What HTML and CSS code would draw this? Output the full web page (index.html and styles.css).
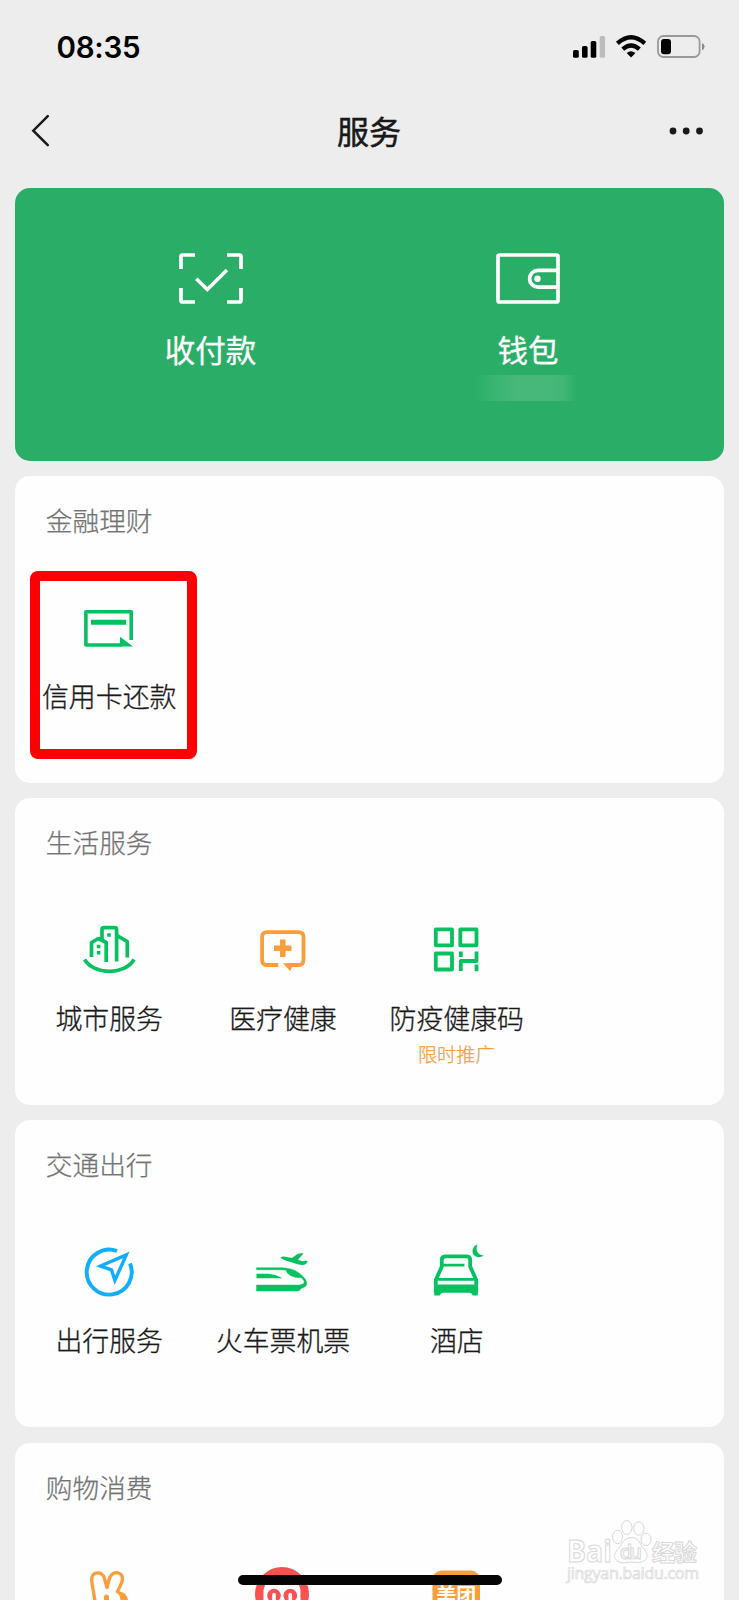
FILE: index.html
```html
<!DOCTYPE html>
<html lang="zh-CN">
<head>
<meta charset="utf-8">
<title>服务</title>
<link rel="stylesheet" href="styles.css">
</head>
<body>
<div class="screen">
  <header class="status">
    <span class="time">08:35</span>
    <svg class="status-icons" width="134" height="26" viewBox="571 34 134 26">
      <rect x="573" y="50" width="5.8" height="7.8" rx="1.6"/>
      <rect x="582" y="46" width="5.6" height="11.8" rx="1.6"/>
      <rect x="590.7" y="41" width="5.6" height="16.8" rx="1.6"/>
      <rect x="599.7" y="36" width="5.4" height="21.8" rx="1.6" fill="#bcbcbc"/>
      <g fill="none" stroke="#000" stroke-width="4.3">
        <path d="M617.4 43.4Q631 31 644.8 43.4"/>
        <path d="M622.8 49.2Q631 41.8 639.4 49.2"/>
      </g>
      <path d="M626.7 53Q631 49.3 635.4 53L631.1 57.6Z"/>
      <rect x="658" y="36" width="41.6" height="21" rx="5.5" fill="none" stroke="#999" stroke-width="1.8"/>
      <rect x="661" y="39" width="10" height="15.2" rx="3"/>
      <path d="M702 43Q704.6 44.3 704.6 46.6T702 50.2Z" fill="#888"/>
    </svg>
  </header>
  <nav class="nav">
    <svg width="24" height="36" viewBox="28 113 24 36"><path d="M47.8 116.2L33.3 130.7L47.8 145.2" fill="none" stroke="#191919" stroke-width="2.5" stroke-linecap="round"/></svg>
    <h1 class="nav-title">服务</h1>
    <svg width="36" height="8" viewBox="669 127 36 8" fill="#191919"><circle cx="673" cy="131" r="3.4"/><circle cx="686.2" cy="131" r="3.4"/><circle cx="699.5" cy="131" r="3.4"/></svg>
  </nav>
  <main class="cards">
    <section class="pay">
      <div class="pay-item">
        <svg width="66" height="54" viewBox="178 252 66 54" fill="none" stroke="#fff" stroke-width="3.7">
          <path d="M195 255H182.500Q181 255 181 256.500V269M227 255H239.500Q241 255 241 256.500V269M195 302H182.500Q181 302 181 300.500V288M227 302H239.500Q241 302 241 300.500V288"/>
          <path d="M196.300 278.800L207.300 289.500L227 270" stroke-width="3.500"/>
        </svg>
        <span class="pay-label">收付款</span>
      </div>
      <div class="pay-item">
        <svg width="66" height="54" viewBox="495 252 66 54" fill="none" stroke="#fff" stroke-width="3.7">
          <rect x="498" y="255" width="60" height="47" rx="1.500"/>
          <path d="M558 270.300H538a8.400 8.400 0 0 0 0 16.800H558"/>
          <circle cx="537.500" cy="278.700" r="3.200" fill="#fff" stroke="none"/>
        </svg>
        <span class="pay-label">钱包</span>
        <span class="balance"></span>
      </div>
    </section>

    <section class="card">
      <h2 class="card-title">金融理财</h2>
      <div class="grid">
        <div class="cell">
          <svg class="icon" viewBox="77 597 64 64" fill="none" stroke="#07c160" stroke-width="3.600" stroke-linejoin="round">
            <path d="M131.200 640V611.700H85.900V645H122" />
            <path d="M120 636.800L133 646.600H120Z" fill="#07c160" stroke="none"/>
            <path d="M91 622.300H126" stroke-width="5"/>
          </svg>
          <span class="label">信用卡还款</span>
        </div>
      </div>
      <div class="highlight"></div>
    </section>

    <section class="card">
      <h2 class="card-title">生活服务</h2>
      <div class="grid">
        <div class="cell">
          <svg class="icon" viewBox="77 919 64 64" fill="none" stroke="#07c160" stroke-width="3.700" stroke-linejoin="round">
            <path d="M91.500 957V942.500L98.500 938.500L106.200 942.500V962"/>
            <path d="M102 939V929.500Q102 927.700 103.800 927.700H114.800Q116.600 927.700 116.600 929.500V961.500"/>
            <path d="M116.600 935.300L127.300 941.500V957.500"/>
            <path d="M84.600 959.500C94 975.300 125 975.300 134 959.500" />
            <path d="M107.200 935h3.600M96.800 946.500h3.600M96.800 952.700h3.600" stroke-width="3.600"/>
          </svg>
          <span class="label">城市服务</span>
        </div>
        <div class="cell">
          <svg class="icon" viewBox="250.500 919.500 64 64" fill="none" stroke="#fa9d3b" stroke-width="3.800">
            <path d="M278.800 965.500H267.500Q262.600 965.500 262.600 960.500V937.600Q262.600 932.600 267.500 932.600H299Q304 932.600 304 937.600V960.500Q304 965.500 299 965.500H288"/>
            <path d="M283.500 963.700H294L290.800 971.800Z" fill="#fa9d3b" stroke="none"/>
            <path d="M274.500 948.800H292M283.300 940V957.500" stroke-width="5.500"/>
          </svg>
          <span class="label">医疗健康</span>
        </div>
        <div class="cell">
          <svg class="icon" viewBox="424 919.500 64 64" fill="none" stroke="#07c160" stroke-width="3.800" stroke-linejoin="round">
            <rect x="435.800" y="929.800" width="16.200" height="16"/>
            <rect x="460.300" y="929.800" width="16.200" height="16"/>
            <rect x="435.800" y="954" width="16.200" height="16"/>
            <path d="M460.800 971.500V961.500H476.500V952M460.800 952V957.500M476.500 965V971.700"/>
          </svg>
          <span class="label">防疫健康码</span>
          <span class="tag">限时推广</span>
        </div>
      </div>
    </section>

    <section class="card">
      <h2 class="card-title">交通出行</h2>
      <div class="grid">
        <div class="cell">
          <svg class="icon" viewBox="77.500 1241 64 64" fill="none" stroke="#10aeff" stroke-width="3.900">
            <path d="M117.500 1251A22.500 22.500 0 1 0 130.500 1263.500"/>
            <path d="M126.800 1254.900L101 1266L112 1269.900L115.400 1280.300Z" stroke-width="3.400"/>
          </svg>
          <span class="label">出行服务</span>
        </div>
        <div class="cell">
          <svg class="icon" viewBox="250.500 1241 64 64" fill="#07c160">
            <path d="M257 1267.700H283C292 1268 298 1271 303.500 1276.500C309 1282 308.500 1287 301.500 1288.500Q300.500 1291 298 1291H257V1285H299C305.500 1284.500 306.500 1281.500 301.500 1277.500C298 1278.300 292 1276.500 289.500 1274.500Q286.500 1272.500 287 1270.500Q284 1269.700 281 1269.700H257Z" stroke="#07c160" stroke-width=".4"/>
            <path d="M257 1273.700H268Q276 1274 283 1278.300H257Z"/>
            <path d="M280.800 1257.600Q283 1256 287 1257L292.500 1257.900L298 1254Q301 1252.600 304 1253.500L298.500 1259.800L303 1261.300Q305 1260.500 308.200 1261Q307 1265 303 1265Q298 1264.800 292.500 1262.400Q284 1260.500 280.800 1257.600Z"/>
          </svg>
          <span class="label">火车票机票</span>
        </div>
        <div class="cell">
          <svg class="icon" viewBox="424 1241 64 64" fill="none" stroke="#07c160" stroke-width="3.800">
            <path d="M435.800 1293V1280L441.800 1266.500V1260Q441.800 1256.400 445.500 1256.400H466.500Q470.200 1256.400 470.200 1260V1266.500L476.200 1280V1293"/>
            <path d="M442 1265.200H464.500M437 1279.300H475" stroke-width="2.800"/>
            <path d="M434.300 1284.500H477.800V1295.500H472.500Q472 1292.800 469 1292.800H443.500Q440.500 1292.800 440 1295.500H434.300Z" fill="#07c160" stroke="none"/>
            <path d="M477.600 1244.200C470.500 1246.500 471 1256.500 478 1257.200Q481.500 1257.300 484 1255.500C478 1255.500 474.800 1250 477.600 1244.200Z" fill="#07c160" stroke="none"/>
          </svg>
          <span class="label">酒店</span>
        </div>
      </div>
    </section>

    <section class="card">
      <h2 class="card-title">购物消费</h2>
      <div class="grid">
        <div class="cell">
          <svg class="icon" viewBox="77 1564 64 64" fill="none" stroke="#fa9d3b" stroke-width="3.300" stroke-linejoin="round">
            <path d="M95.500 1604L91.800 1582C90 1570.500 102.500 1570.500 104.300 1578L107 1587.500L109.500 1578C112 1570 125 1571 122 1581.500Q120.500 1586 117.500 1591.500L123 1596"/>
            <path d="M118.500 1591.500Q127.500 1592 128.500 1602H121Z" fill="#fa9d3b" stroke="none"/>
            <path d="M106.500 1597V1602" stroke-width="5" stroke-linecap="round"/>
          </svg>
        </div>
        <div class="cell">
          <svg class="icon" viewBox="251 1564 64 64">
            <circle cx="283" cy="1594" r="27" fill="#fa5151"/>
            <path d="M264.500 1602V1590Q266 1584 268 1582H298Q300 1584 301.500 1590V1602Z" fill="#fefefe"/>
            <circle cx="275" cy="1595.500" r="6.800" fill="#fa5151"/><circle cx="291.300" cy="1595.500" r="6.800" fill="#fa5151"/>
            <path d="M275 1594.500V1602M291.300 1594.500V1602" stroke="#fff" stroke-width="3.600" stroke-linecap="round"/>
          </svg>
        </div>
        <div class="cell">
          <svg class="icon" viewBox="424 1564 64 64">
            <rect x="432.500" y="1570.500" width="47.500" height="48" rx="9" fill="#fa9d3b"/>
            <text x="456.300" y="1603" class="meituan">美团</text>
          </svg>
        </div>
      </div>
    </section>
  </main>

  <svg class="watermark" width="138" height="72" viewBox="564 1517 138 72" fill="#fefefe" stroke="#d8d8d8" stroke-width="1">
    <text x="567" y="1562" class="wm-brand" textLength="45" lengthAdjust="spacingAndGlyphs">Bai</text>
    <text x="652" y="1561" class="wm-cjk" textLength="45">经验</text>
    <ellipse cx="617.500" cy="1537" rx="5" ry="6.700"/>
    <ellipse cx="626.800" cy="1527.500" rx="5.200" ry="7"/>
    <ellipse cx="638.800" cy="1528.500" rx="5.200" ry="6.700"/>
    <ellipse cx="646" cy="1539.500" rx="5" ry="6.200"/>
    <path d="M631 1537.500C639 1537.500 639.500 1544 644 1549C652 1558 643 1563.500 636 1562.500Q631 1561.500 626 1562.500C618 1564 610.500 1558 617.500 1549.500C623 1544 623 1538 631 1537.500Z"/>
    <text x="620" y="1559" class="wm-du" textLength="22">du</text>
    <text x="567" y="1579" class="wm-url" textLength="132">jingyan.baidu.com</text>
  </svg>
  <div class="home-bar"></div>
</div>
</body>
</html>
```
FILE: styles.css
```css
* { box-sizing: border-box; }
body {
  margin: 0;
  background: #ededed;
  color: #191919;
  font-family: "Noto Sans CJK SC", sans-serif;
}
.screen {
  position: relative;
  height: 1600px;
  overflow: hidden;
}
.status {
  display: flex;
  justify-content: space-between;
  align-items: center;
  height: 94px;
  padding: 0 34px 0 56.500px;
}
.time {
  font: 600 29.500px/36px Inter, sans-serif;
  letter-spacing: -.25px;
  color: #000;
}
.nav {
  display: flex;
  justify-content: space-between;
  align-items: center;
  height: 74px;
  padding: 0 34px 0 28px;
}
.nav-title {
  margin: -3px 0 0 17px;
  font-size: 32px;
  line-height: 40px;
  font-weight: 400;
  -webkit-text-stroke: .5px;
}
.cards {
  display: flex;
  flex-direction: column;
  gap: 15.3px;
  padding: 19.5px 15px 0 15.3px;
}
.pay {
  display: grid;
  grid-template-columns: 317.5px 317.5px;
  justify-content: center;
  height: 273px;
  padding-top: 64px;
  border-radius: 15px;
  background: #2aae67;
}
.pay-item {
  display: flex;
  flex-direction: column;
  align-items: center;
}
.pay-label {
  margin: 23.500px 1px 0 0;
  color: #fff;
  font-size: 30.500px;
  line-height: 40px;
  font-weight: 400;
  -webkit-text-stroke: .3px;
}
.balance {
  width: 108px;
  height: 26px;
  margin-top: 6px;
  background: linear-gradient(90deg, transparent, #3db574 22%, #47b879 40%, #47b879 70%, #41b676 83%, transparent 95%);
}
.card {
  position: relative;
  flex: none;
  height: 307px;
  padding: 24px 6.500px 0;
  border-radius: 15px;
  background: #fefefe;
}
.card-title {
  margin: 0 0 0 24px;
  color: #737373;
  font-size: 26.700px;
  line-height: 40px;
  font-weight: 300;
  -webkit-text-stroke: .25px;
}
.grid {
  display: grid;
  grid-template-columns: repeat(4, 173.800px);
  margin-top: 57px;
}
.cell {
  display: flex;
  flex-direction: column;
  align-items: center;
}
.icon { width: 64px; height: 64px; }
.label {
  margin: 15px 0 0 1px;
  font-size: 26.900px;
  line-height: 40px;
  font-weight: 300;
  -webkit-text-stroke: .3px;
  white-space: nowrap;
}
.tag {
  margin-top: 1.500px;
  color: #fa9d3b;
  font-size: 19.200px;
  line-height: 28px;
  font-weight: 300;
  -webkit-text-stroke: .25px;
}
.highlight {
  position: absolute;
  left: 14.700px;
  top: 95px;
  width: 167px;
  height: 188px;
  border: 10px solid #fe0000;
  border-radius: 8px;
}
.meituan {
  fill: #fff;
  font: 700 20px "Noto Sans CJK SC", sans-serif;
  text-anchor: middle;
}
.watermark {
  position: absolute;
  left: 564px;
  top: 1517px;
}
.wm-brand { font: 700 30px "Open Sans", sans-serif; }
.wm-cjk { font: 700 23px "Noto Sans CJK SC", sans-serif; }
.wm-du { font: 600 20px "Open Sans", sans-serif; }
.wm-url { font: 400 16px "Open Sans", sans-serif; stroke-width: .7px; }
.home-bar {
  position: absolute;
  left: 238px;
  top: 1575px;
  width: 264px;
  height: 10px;
  border-radius: 5px;
  background: #050505;
}
```
